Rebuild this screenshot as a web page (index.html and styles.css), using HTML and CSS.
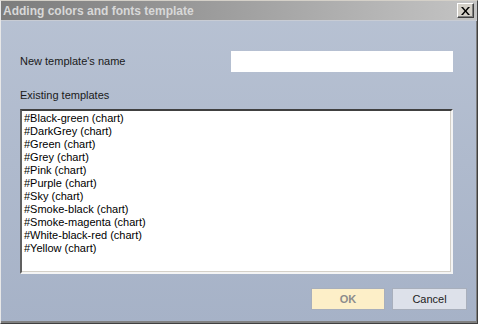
FILE: index.html
```html
<!DOCTYPE html>
<html lang="en">
<head>
  <meta charset="UTF-8" />
  <title>Adding colors and fonts template</title>
  <link rel="stylesheet" href="styles.css">
</head>
<body>
  <div class="window">
    <div class="titlebar">
      <span class="title">Adding colors and fonts template</span>
      <button class="close-btn" title="Close">
        <svg width="9" height="8" viewBox="0 0 9 8"><path d="M0 0h2l2.5 3 2.5-3h2L5.5 4 9 8H7L4.5 5 2 8H0l3.5-4z" fill="#000"/></svg>
      </button>
    </div>

    <div class="content">
      <div class="name-row">
        <label class="label">New template's name</label>
        <input type="text" class="name-input" />
      </div>

      <div class="label list-label">Existing templates</div>
      <ul class="template-list">
        <li>#Black-green (chart)</li>
        <li>#DarkGrey (chart)</li>
        <li>#Green (chart)</li>
        <li>#Grey (chart)</li>
        <li>#Pink (chart)</li>
        <li>#Purple (chart)</li>
        <li>#Sky (chart)</li>
        <li>#Smoke-black (chart)</li>
        <li>#Smoke-magenta (chart)</li>
        <li>#White-black-red (chart)</li>
        <li>#Yellow (chart)</li>
      </ul>

      <div class="buttons">
        <button class="btn ok-btn" disabled>OK</button>
        <button class="btn cancel-btn">Cancel</button>
      </div>
    </div>
  </div>
</body>
</html>
```

FILE: styles.css
```css
body {
  margin: 0;
  padding: 0;
  font-family: "Liberation Sans", Arial, sans-serif;
  font-size: 11px;
  background: #808080;
}
.window {
  width: 478px;
  height: 324px;
  box-sizing: border-box;
  border-top: 1px solid #d4d0c8;
  border-left: 1px solid #e8e8e8;
  border-right: 1px solid #404040;
  border-bottom: 1px solid #404040;
  box-shadow: inset -1px -2px 0 #808080;
  background: linear-gradient(#b8c2d3, #a6b2c7);
  display: flex;
  flex-direction: column;
}
.titlebar {
  height: 19px;
  background: linear-gradient(to right, #7c7c7c, #c4c4c4);
  border-bottom: 1px solid #c8ccd4;
  display: flex;
  align-items: center;
  justify-content: space-between;
  padding: 0 3px 0 2px;
}
.title {
  color: #d8d8d8;
  font-weight: bold;
  font-size: 12px;
}
.close-btn {
  width: 17px;
  height: 15px;
  padding: 0;
  background: #d4d0c8;
  border: 1px solid;
  border-color: #ffffff #404040 #404040 #ffffff;
  box-shadow: inset -1px -1px 0 #808080;
  display: flex;
  align-items: center;
  justify-content: center;
}
.content {
  flex: 1;
  padding: 0 24px 0 19px;
  display: flex;
  flex-direction: column;
}
.label {
  color: #1a1a1a;
  line-height: 13px;
}
.name-row {
  margin-top: 30px;
  display: flex;
  align-items: center;
  justify-content: space-between;
}
.name-input {
  width: 222px;
  height: 21px;
  box-sizing: border-box;
  border: none;
  background: #fff;
  margin: 0;
}
.list-label {
  margin-top: 17px;
}
.template-list {
  list-style: none;
  margin: 7px 0 0 0;
  padding: 1px 2px;
  height: 165px;
  box-sizing: border-box;
  background: #fff;
  border: 2px solid;
  border-color: #404040 #f4f4f4 #f4f4f4 #606060;
  box-shadow: inset -1px -1px 0 #d4d0c8;
}
.template-list li {
  line-height: 13px;
  color: #000;
}
.buttons {
  margin: 14px -14px 0 0;
  display: flex;
  justify-content: flex-end;
  gap: 7px;
}
.btn {
  height: 22px;
  width: 74px;
  font-family: "Liberation Sans", Arial, sans-serif;
  font-size: 11px;
  border: 1px solid #a8afbc;
  padding: 0;
}
.ok-btn {
  background: #fdefc8;
  color: #8c8c8c;
  font-weight: bold;
}
.cancel-btn {
  width: 75px;
  background: #dde1ea;
  color: #222;
}
```
